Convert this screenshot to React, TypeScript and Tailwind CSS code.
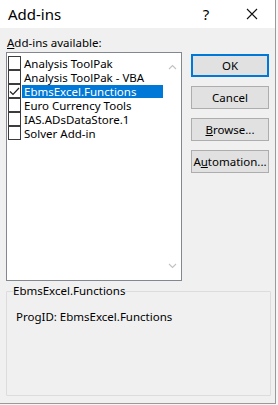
const items = [
  "Analysis ToolPak",
  "Analysis ToolPak - VBA",
  "EbmsExcel.Functions",
  "Euro Currency Tools",
  "IAS.ADsDataStore.1",
  "Solver Add-in",
];

const Check = () => (
  <svg width="11" height="11" viewBox="0 0 11 11" fill="none">
    <path d="M1 5.5 L4 8.5 L10 2" stroke="#202020" strokeWidth="1.2" />
  </svg>
);

const Chevron = ({ up }: { up?: boolean }) => (
  <svg width="9" height="6" viewBox="0 0 9 6" fill="none">
    <path
      d={up ? "M1 5 L4.5 1.5 L8 5" : "M1 1 L4.5 4.5 L8 1"}
      stroke="#c2c2c2"
      strokeWidth="1.1"
    />
  </svg>
);

const Button = ({ children, focused }: { children: React.ReactNode; focused?: boolean }) => (
  <div
    className={`h-[23px] w-[78px] flex items-center justify-center bg-[#e1e1e1] text-[11.5px] leading-[14px] text-black ${
      focused ? "border-2 border-[#0078d7]" : "border border-[#adadad]"
    }`}
  >
    {children}
  </div>
);

export default function App() {
  return (
    <div className="w-[278px] h-[405px] bg-[#f7f7f7] font-['Noto_Sans',sans-serif]">
      <div className="w-[276px] h-[404px] bg-[#f0f0f0] border-r border-b border-[#9a9a9a] flex flex-col">
        <div className="h-[28px] bg-white flex items-center pl-2 text-[15px] text-black">
          <span className="flex-1">Add-ins</span>
          <span className="w-[46px] text-center text-[15px]">?</span>
          <span className="w-[46px] flex justify-center">
            <svg width="12" height="12" viewBox="0 0 12 12">
              <path d="M1 1 L11 11 M11 1 L1 11" stroke="#111" strokeWidth="1.1" />
            </svg>
          </span>
        </div>
        <div className="flex flex-col px-[6px]">
          <div className="h-[24px] flex items-end pb-[2px] text-[11.5px] leading-[14px] text-black pl-px">
            <span>
              <span className="underline">A</span>dd-ins available:
            </span>
          </div>
          <div className="flex gap-[9px]">
            <div className="w-[178px] h-[229px] border border-[#828790] bg-white flex">
              <div className="flex-1 flex flex-col pt-[3px]">
                {items.map((it, i) => (
                  <div key={it} className="h-[14px] flex items-center">
                    <div className="ml-px w-[13px] h-[14px] border border-[#3c3c3c] bg-white flex items-center justify-center">
                      {i === 2 && <Check />}
                    </div>
                    <div
                      className={`ml-px flex-1 h-[13px] flex items-center pl-[2px] text-[11.5px] leading-[13px] ${
                        i === 2 ? "bg-[#0078d7] text-white" : "text-black"
                      }`}
                    >
                      {it}
                    </div>
                  </div>
                ))}
              </div>
              <div className="w-[18px] flex flex-col items-center justify-between py-[11px]">
                <Chevron up />
                <Chevron />
              </div>
            </div>
            <div className="flex flex-col gap-[9px] pt-[2px]">
              <Button focused>OK</Button>
              <Button>Cancel</Button>
              <Button>
                <span>
                  <span className="underline">B</span>rowse...
                </span>
              </Button>
              <Button>
                <span>
                  A<span className="underline">u</span>tomation...
                </span>
              </Button>
            </div>
          </div>
          <fieldset className="mt-[3px] w-[265px] h-[112px] border border-[#dcdcdc] rounded-[1px] px-[9px]">
            <legend className="text-[11.5px] leading-[14px] text-black px-0 -ml-[3px]">
              EbmsExcel.Functions
            </legend>
            <div className="pt-[12px] text-[11.5px] leading-[14px] text-black">ProgID: EbmsExcel.Functions</div>
          </fieldset>
        </div>
      </div>
    </div>
  );
}
